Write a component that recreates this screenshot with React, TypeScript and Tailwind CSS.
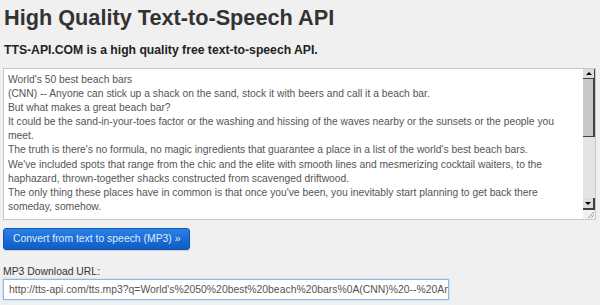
import React from "react";

const lines = [
  "World's 50 best beach bars",
  "(CNN) -- Anyone can stick up a shack on the sand, stock it with beers and call it a beach bar.",
  "But what makes a great beach bar?",
  "It could be the sand-in-your-toes factor or the washing and hissing of the waves nearby or the sunsets or the people you meet.",
  "The truth is there's no formula, no magic ingredients that guarantee a place in a list of the world's best beach bars.",
  "We've included spots that range from the chic and the elite with smooth lines and mesmerizing cocktail waiters, to the haphazard, thrown-together shacks constructed from scavenged driftwood.",
  "The only thing these places have in common is that once you've been, you inevitably start planning to get back there someday, somehow.",
];

export default function App() {
  return (
    <div
      className="w-[600px] h-[305px] overflow-hidden bg-[#f0f0f0] pl-[3px] pt-[4px]"
      style={{ fontFamily: '"Liberation Sans", Arial, sans-serif' }}
    >
      <h1 className="text-[21.7px] leading-[28px] font-bold text-[#333] pl-[1px]">
        High Quality Text-to-Speech API
      </h1>
      <p className="mt-[10px] text-[12.2px] leading-[16px] font-bold text-[#222] pl-[1px]">
        TTS-API.COM is a high quality free text-to-speech API.
      </p>
      <div className="mt-[10px] w-[593px] h-[152px] bg-white border border-[#c8c8c8] flex">
        <div className="flex-1 overflow-hidden pl-[4px] pt-[4px] pr-[6px] text-[10.3px] leading-[14.1px] text-[#555]">
          {lines.map((l, i) => (
            <div key={i}>{l}</div>
          ))}
        </div>
        <div className="w-[12px] flex flex-col">
          <div className="h-[10px] bg-[#dcdcdc] border-r border-b border-[#404040] flex items-center justify-center">
            <div className="w-0 h-0 border-l-[3px] border-r-[3px] border-b-[3px] border-l-transparent border-r-transparent border-b-black" />
          </div>
          <div className="h-[58px] bg-[#c8c8c8] border-r-2 border-b border-[#404040]" />
          <div className="flex-1 bg-[#e4e4e4]" />
          <div className="h-[12px] bg-[#dcdcdc] border-r-2 border-b-2 border-[#404040] flex items-center justify-center">
            <div className="w-0 h-0 border-l-[3px] border-r-[3px] border-t-[3px] border-l-transparent border-r-transparent border-t-black" />
          </div>
          <div className="h-[9px] bg-[#f0f0f0] flex items-end justify-end pr-[1px] pb-[1px]">
            <svg width="7" height="7" viewBox="0 0 7 7">
              <path d="M7 1 L1 7 M7 4 L4 7" stroke="#a0a0a0" strokeWidth="1" />
            </svg>
          </div>
        </div>
      </div>
      <button className="mt-[8px] w-[187px] h-[22px] rounded-[3px] border border-[#0b57b8] bg-gradient-to-b from-[#2b80e6] to-[#0d5cc2] text-[#dfeaff] text-[10.4px] leading-[20px] text-left pl-[9px] shadow-[0_1px_1px_rgba(0,0,0,0.15)]">
        Convert from text to speech (MP3) »
      </button>
      <div className="mt-[15px] text-[10.4px] leading-[14px] text-[#333]">MP3 Download URL:</div>
      <div className="w-[446px] h-[21px] bg-white border border-[#8cb8e8] shadow-[0_0_2px_#a9cdf3] overflow-hidden whitespace-nowrap pl-[5px] text-[10.4px] leading-[19px] text-[#555]">
        http://tts-api.com/tts.mp3?q=World's%2050%20best%20beach%20bars%0A(CNN)%20--%20Anyone%20can%20stick
      </div>
    </div>
  );
}
